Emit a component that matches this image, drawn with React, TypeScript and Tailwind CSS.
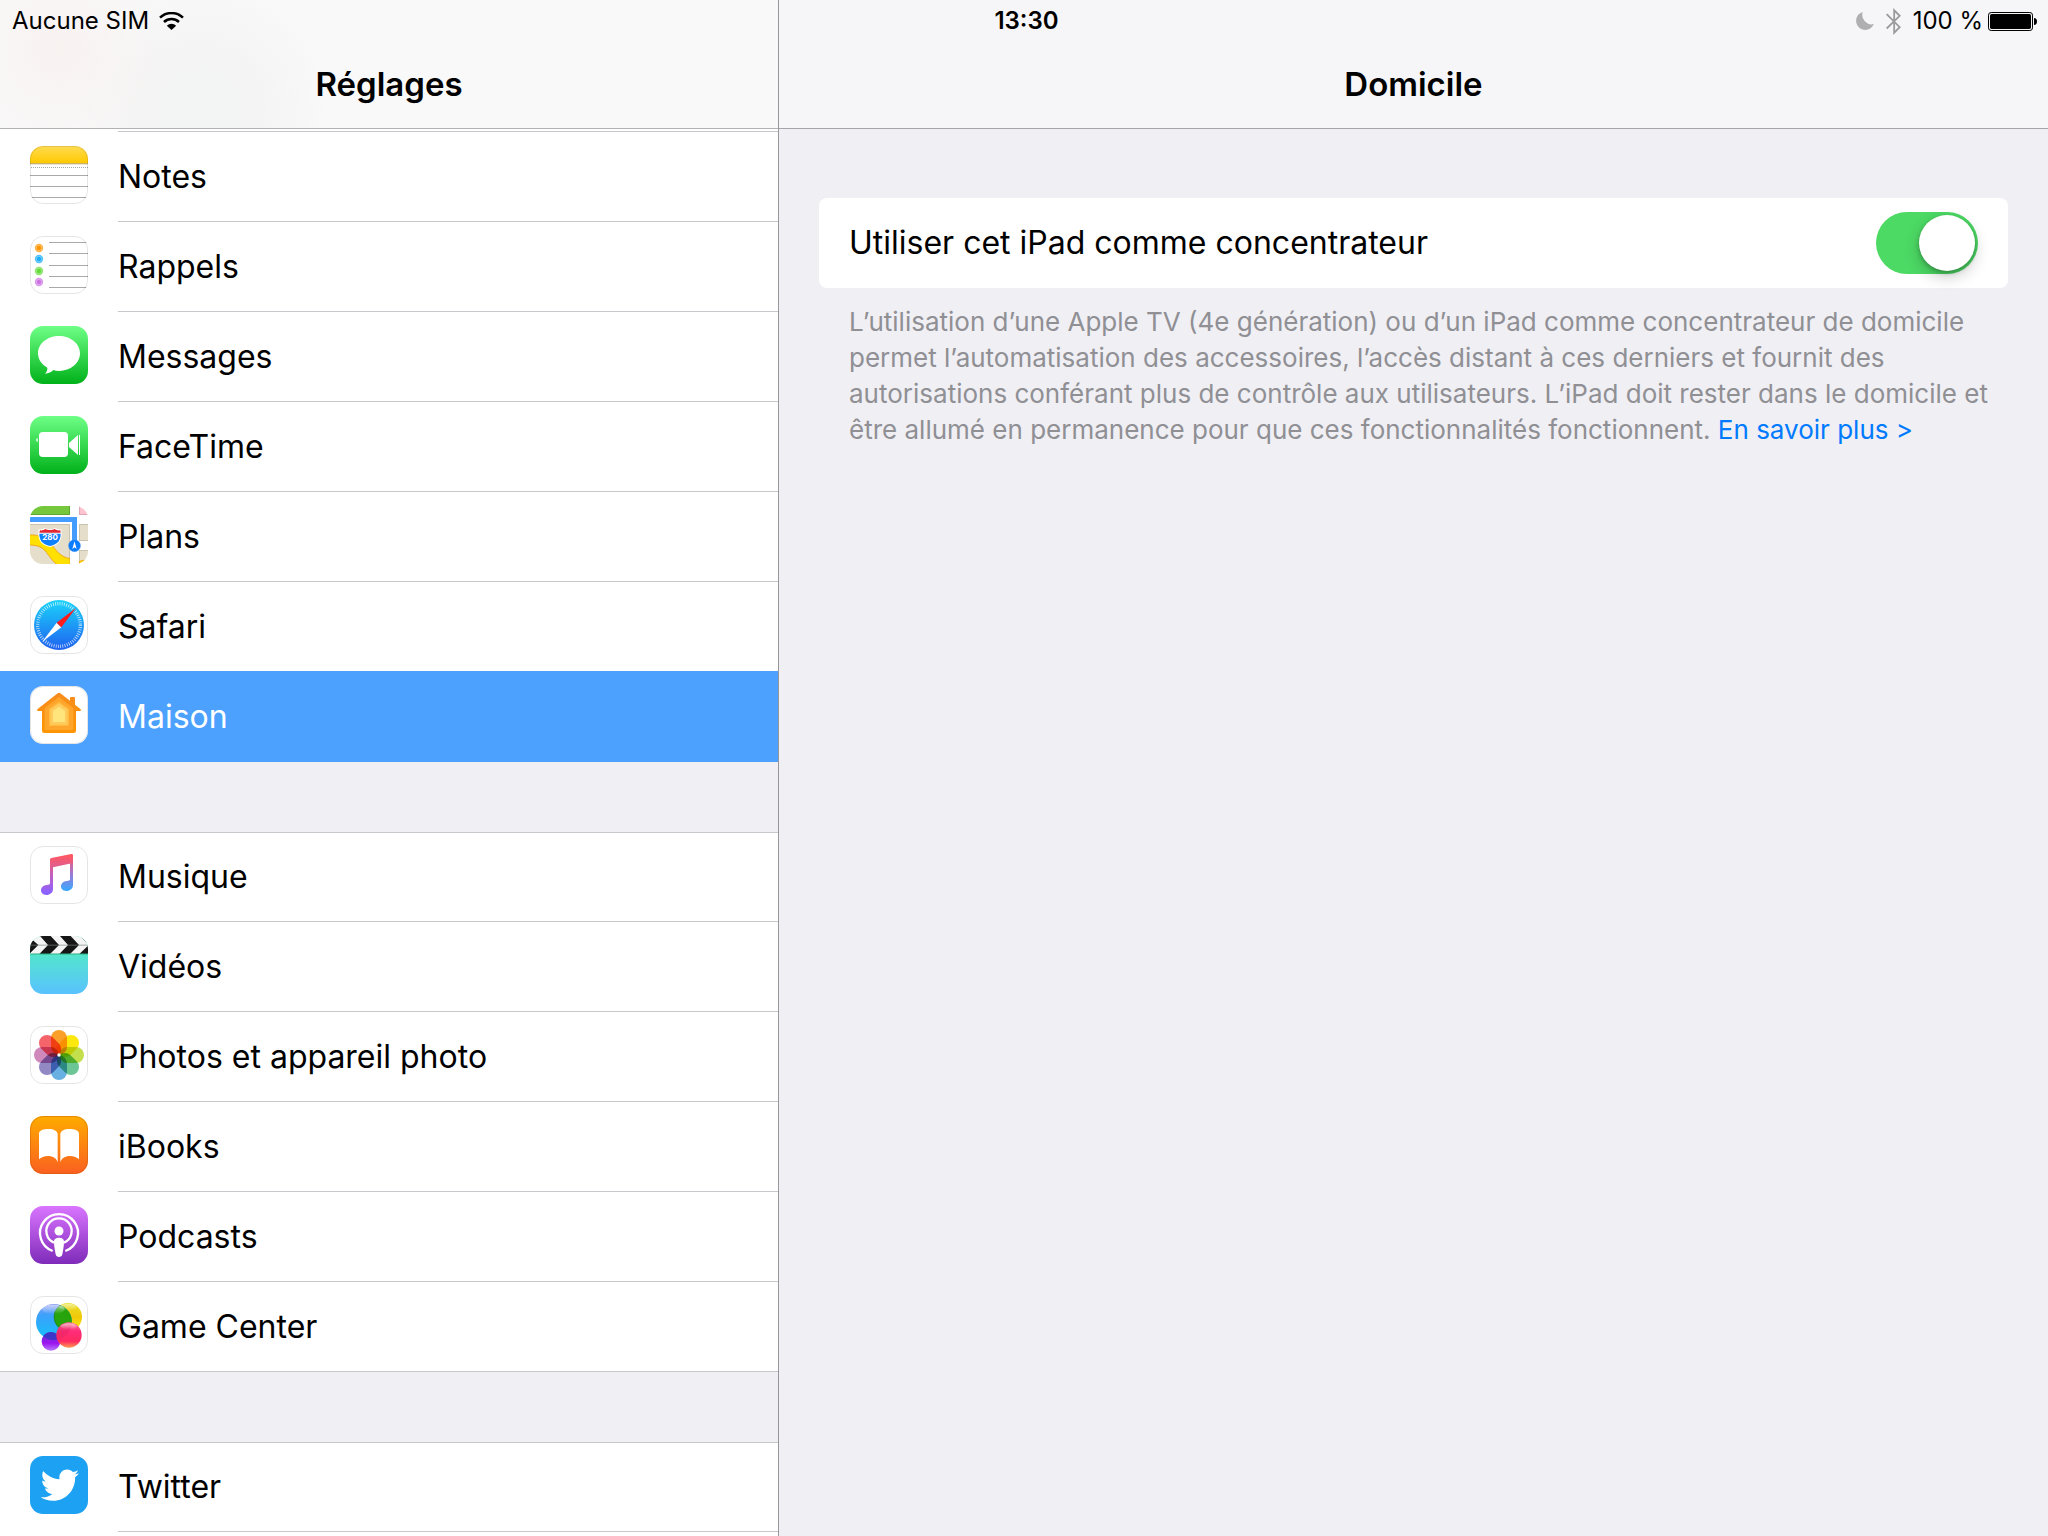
import { useState } from "react";
import type { ReactNode } from "react";
import { FaTwitter } from "react-icons/fa";
import clsx from "clsx";

// ---------- App icons ----------

type TileProps = { id: string; from?: string; to?: string; outlined?: boolean; children?: ReactNode };

// Rounded tile shared by every app icon, the art inside is drawn on a 174 grid
const Tile = ({ id, from = "#ffffff", to = "#ffffff", outlined, children }: TileProps) => (
  <svg viewBox="0 0 174 174" className="h-[58px] w-[58px] shrink-0" aria-hidden="true">
    <defs>
      <linearGradient id={`${id}-bg`} x1="0" y1="0" x2="0" y2="1">
        <stop offset="0" stopColor={from} />
        <stop offset="1" stopColor={to} />
      </linearGradient>
      <clipPath id={`${id}-clip`}>
        <rect width="174" height="174" rx="39" />
      </clipPath>
    </defs>
    <g clipPath={`url(#${id}-clip)`}>
      <rect width="174" height="174" fill={`url(#${id}-bg)`} />
      {children}
    </g>
    {outlined && (
      <rect x="1.5" y="1.5" width="171" height="171" rx="38" fill="none" stroke="#000" strokeOpacity="0.1" strokeWidth="3" />
    )}
  </svg>
);

const NotesIcon = () => (
  <Tile id="notes" outlined>
    <defs>
      <linearGradient id="notes-top" x1="0" y1="0" x2="0" y2="1">
        <stop offset="0" stopColor="#ffdb52" />
        <stop offset="1" stopColor="#ffc900" />
      </linearGradient>
    </defs>
    <rect width="174" height="52" fill="url(#notes-top)" />
    <rect y="51" width="174" height="4" fill="#c9b06a" />
    <path d="M3 64.5H174" stroke="#a9a9a9" strokeWidth="3" strokeDasharray="3 3" />
    <path d="M0 88.500H174M0 121.500H174M0 154.500H174" stroke="#a9a9ab" strokeWidth="3" />
  </Tile>
);

const reminders = [
  { y: 36, color: "#ff9500" },
  { y: 69, color: "#1badf8" },
  { y: 105, color: "#63da38" },
  { y: 138, color: "#cc73e1" },
];

const RemindersIcon = () => (
  <Tile id="reminders" outlined>
    {reminders.map((dot) => (
      <g key={dot.y} fill={dot.color}>
        <circle cx="27" cy={dot.y} r="12.5" fillOpacity="0.75" />
        <circle cx="27" cy={dot.y} r="8" stroke="#fff" strokeOpacity="0.45" strokeWidth="2" />
      </g>
    ))}
    <path d="M57 19.500H174M57 52.500H174M57 88.500H174M57 121.500H174M57 154.500H174" stroke="#a9a9ab" strokeWidth="3" />
  </Tile>
);

const MessagesIcon = () => (
  <Tile id="messages" from="#6eff86" to="#00b119">
    <path
      fill="#fff"
      d="M87 30C52 30 24 53 24 82C24 100 35 116 52 125C53 132 50 138 45 143C55 143 64 138 70 132C75 134 81 135 87 135C122 135 150 111 150 82C150 53 122 30 87 30Z"
    />
  </Tile>
);

const FaceTimeIcon = () => (
  <Tile id="facetime" from="#6eff86" to="#00b119">
    <g fill="#fff">
      <rect x="27" y="48" width="87" height="75" rx="11" />
      <path d="M117 81L144 57V117L117 93Z" />
      <rect x="147" y="57" width="3" height="60" />
      <path d="M23 66V78C17 76 17 68 23 66Z" />
    </g>
  </Tile>
);

const MapsIcon = () => (
  <Tile id="maps">
    <path fill="#76c73c" d="M0 0H120V27H0Z" />
    <path fill="none" stroke="#5fa830" strokeWidth="3" d="M118.500 0V25.500H0" />
    <path fill="#ffc3d0" d="M147 0H174V27H147Z" />
    <path fill="none" stroke="#dca9b5" strokeWidth="3" d="M148.500 0V25.500H174" />
    <path fill="#e4deca" d="M0 54H120V174H0ZM147 54H174V105H147ZM147 132H174V174H147Z" />
    <path fill="none" stroke="#c9c3b0" strokeWidth="3" d="M0 55.500H118.500V174M174 55.500H148.500V103.500H174M174 133.500H148.500V174" />
    <path
      fill="#ffe000"
      stroke="#f0a818"
      strokeWidth="3"
      d="M-4 87C30 84 52 100 68 120C84 142 98 154 120 158V180H88C66 168 58 148 44 133C30 119 14 117 -4 117Z"
    />
    <path fill="#ffe000" stroke="#f0a818" strokeWidth="3" d="M148 166C158 162 166 164 178 160V180H148Z" />
    <path fill="#fff" d="M120 28H147V180H120Z" />
    <path fill="#459cff" d="M0 33H141V120H126V48H0Z" />
    <path fill="#fff" d="M26 70C34 71 40 69 44 66C52 70 68 70 76 66C80 69 86 71 94 70C98 98 90 118 60 123C30 118 22 98 26 70Z" />
    <path fill="#e22733" d="M30 73C37 74 42 72 46 69C53 73 67 73 74 69C78 72 83 74 91 73L92 80H28Z" />
    <path fill="#0f80ff" d="M28 83H92C92 102 84 115 60 120C36 115 28 102 28 83Z" />
    <text x="60" y="103" fill="#fff" fontSize="24" fontWeight="700" textAnchor="middle" fontFamily="Inter, sans-serif">
      280
    </text>
    <circle cx="133.500" cy="119" r="18" fill="#0a7cff" stroke="#5a9ee8" strokeWidth="1.500" />
    <path fill="#fff" d="M133.500 106L140 129L133.500 124L127 129Z" />
  </Tile>
);

const SafariIcon = () => (
  <Tile id="safari" outlined>
    <defs>
      <linearGradient id="safari-dial" x1="0" y1="0" x2="0" y2="1">
        <stop offset="0" stopColor="#1bd3fb" />
        <stop offset="1" stopColor="#1f62f0" />
      </linearGradient>
    </defs>
    <circle cx="87" cy="87" r="75" fill="url(#safari-dial)" />
    <circle cx="87" cy="87" r="64" fill="none" stroke="#fff" strokeOpacity="0.75" strokeWidth="10" strokeDasharray="2.400 4.300" />
    <path fill="#fff" d="M36 138L80 80L94 94Z" />
    <path fill="#ff1b1b" d="M138 36L80 80L94 94Z" />
  </Tile>
);

const HomeIcon = () => (
  <Tile id="home" outlined>
    <defs>
      <linearGradient id="home-roof" x1="0" y1="0" x2="0" y2="1">
        <stop offset="0" stopColor="#f78c1e" />
        <stop offset="1" stopColor="#ff9500" />
      </linearGradient>
    </defs>
    <path
      fill="url(#home-roof)"
      d="M83 22Q87 19 91 22L120 44V36Q120 33 123 33H132Q135 33 135 36V56L152 70Q155 75 150 75H138V134Q138 141 131 141H43Q36 141 36 134V75H24Q19 75 22 70Z"
    />
    <path fill="#ffa52b" d="M87 33L130 66V128Q130 132 126 132H48Q44 132 44 128V66Z" />
    <path fill="#ffb93f" d="M87 47L117 68V120H57V68Z" />
    <path fill="#ffcb5c" d="M87 52L113 70V116H61V70Z" />
    <path fill="#ffe57c" d="M87 62L105 75V108H69V75Z" />
  </Tile>
);

const MusicIcon = () => (
  <Tile id="music" outlined>
    <defs>
      <linearGradient id="music-left" gradientUnits="userSpaceOnUse" x1="0" y1="34" x2="0" y2="140">
        <stop offset="0" stopColor="#ff5a63" />
        <stop offset="0.500" stopColor="#c25fc0" />
        <stop offset="1" stopColor="#8b62ff" />
      </linearGradient>
      <linearGradient id="music-right" gradientUnits="userSpaceOnUse" x1="0" y1="24" x2="0" y2="130">
        <stop offset="0" stopColor="#ff5761" />
        <stop offset="0.550" stopColor="#a077d0" />
        <stop offset="1" stopColor="#3fa6fc" />
      </linearGradient>
      <linearGradient id="music-beam" gradientUnits="userSpaceOnUse" x1="0" y1="28" x2="0" y2="64">
        <stop offset="0" stopColor="#ff5860" />
        <stop offset="1" stopColor="#dd5f93" />
      </linearGradient>
    </defs>
    <path
      fill="url(#music-left)"
      d="M60 40H69V129C69 140 60 147 49 147C39 147 33 141 33 133C33 124 40 118 50 117C57 116 60 116 60 110Z"
    />
    <path
      fill="url(#music-right)"
      d="M120 28H129V117C129 128 120 135 109 135C99 135 93 129 93 121C93 112 100 106 110 105C117 104 120 104 120 98Z"
    />
    <path fill="url(#music-beam)" d="M60 41Q60 37 64 36L124 24Q129 23 129 28V51L69 64L60 66Z" />
  </Tile>
);

const VideosIcon = () => (
  <Tile id="videos" from="#4ff5b4" to="#59c2ff">
    <rect width="174" height="54" fill="#f4f4f4" />
    <path
      fill="#161616"
      d="M0 10L8 12L25 27L0 52ZM30 0H62L87 27L60 54H28L54 27ZM90 0H122L147 27L120 54H88L114 27ZM174 29V54H148Z"
    />
    <path d="M152 2L174 24" stroke="#77807d" strokeWidth="2" />
    <path d="M0 27.500H174" stroke="#77807d" strokeWidth="2" />
    <path d="M0 54H174" stroke="#2fae80" strokeWidth="3" />
  </Tile>
);

const petals = ["#fa9f2a", "#fce80c", "#c3df4c", "#6bc594", "#68b0e2", "#9288c4", "#cf8abb", "#f5646a"];

const PhotosIcon = () => (
  <Tile id="photos" outlined>
    {petals.map((color, i) => (
      <rect
        key={color}
        x="63"
        y="12"
        width="48"
        height="74"
        rx="24"
        fill={color}
        transform={`rotate(${i * 45} 87 87)`}
        className="mix-blend-multiply"
      />
    ))}
    <circle cx="87" cy="87" r="5" fill="#fff" />
  </Tile>
);

const BooksIcon = () => (
  <Tile id="books" from="#ffab00" to="#fa6020">
    <path
      fill="#fff"
      d="M27 53C27 43 41 39 56 39C71 39 83 45 83 55V139C80 127 69 120 54 120C42 120 33 124 27 130ZM147 53C147 43 133 39 118 39C103 39 91 45 91 55V139C94 127 105 120 120 120C132 120 141 124 147 130Z"
    />
    <rect x="1.500" y="1.500" width="171" height="171" rx="38" fill="none" stroke="#b85400" strokeOpacity="0.350" strokeWidth="3" />
  </Tile>
);

const PodcastsIcon = () => (
  <Tile id="podcasts" from="#d975ff" to="#7f2bba">
    <g fill="none" stroke="#fff" strokeWidth="7">
      <path d="M68 135A57 57 0 1 1 106 135" />
      <path d="M72 110A38 38 0 1 1 102 110" />
    </g>
    <g fill="#fff">
      <circle cx="87" cy="75" r="13.500" />
      <path d="M72 107C72 98 79 95 87 95C95 95 102 98 102 107C102 120 99 134 97 145C96 151 92 153 87 153C82 153 78 151 77 145C75 134 72 120 72 107Z" />
    </g>
  </Tile>
);

const GameCenterIcon = () => (
  <Tile id="games" outlined>
    <defs>
      <linearGradient id="games-blue" x1="0" y1="0" x2="0" y2="1">
        <stop offset="0" stopColor="#8d9cf5" />
        <stop offset="0.300" stopColor="#3da0fa" />
        <stop offset="1" stopColor="#12c2fa" />
      </linearGradient>
      <linearGradient id="games-yellow" x1="0" y1="0" x2="0" y2="1">
        <stop offset="0" stopColor="#e8e02a" />
        <stop offset="0.500" stopColor="#f0c808" />
        <stop offset="1" stopColor="#f9ee10" />
      </linearGradient>
      <linearGradient id="games-pink" x1="0" y1="0" x2="0" y2="1">
        <stop offset="0" stopColor="#ff7fa0" />
        <stop offset="0.350" stopColor="#ff2c78" />
        <stop offset="0.750" stopColor="#ff2a60" />
        <stop offset="1" stopColor="#ff9a50" />
      </linearGradient>
      <linearGradient id="games-purple" x1="0" y1="0" x2="0" y2="1">
        <stop offset="0" stopColor="#5a3ad8" />
        <stop offset="0.600" stopColor="#9d14ee" />
        <stop offset="1" stopColor="#b57cff" />
      </linearGradient>
      <linearGradient id="games-shine" x1="0" y1="0" x2="0" y2="1">
        <stop offset="0" stopColor="#fff" stopOpacity="0.550" />
        <stop offset="1" stopColor="#fff" stopOpacity="0" />
      </linearGradient>
      <clipPath id="games-blue-clip">
        <circle cx="72" cy="78" r="54" />
      </clipPath>
    </defs>
    <circle cx="114" cy="63" r="42" fill="url(#games-yellow)" />
    <circle cx="72" cy="78" r="54" fill="url(#games-blue)" />
    <g clipPath="url(#games-blue-clip)">
      <circle cx="114" cy="63" r="42" fill="#27a30c" stroke="#1c7d20" strokeWidth="2" />
    </g>
    <circle cx="63" cy="136" r="28" fill="url(#games-purple)" />
    <g clipPath="url(#games-blue-clip)">
      <circle cx="63" cy="136" r="28" fill="#3c35c8" />
    </g>
    <circle cx="117" cy="117" r="38" fill="url(#games-pink)" />
    <g clipPath="url(#games-blue-clip)">
      <circle cx="117" cy="117" r="38" fill="#d8205a" fillOpacity="0.300" />
    </g>
    <ellipse cx="70" cy="40" rx="34" ry="14" fill="url(#games-shine)" />
    <ellipse cx="114" cy="33" rx="26" ry="10" fill="url(#games-shine)" />
    <ellipse cx="116" cy="91" rx="24" ry="9" fill="url(#games-shine)" />
  </Tile>
);

const TwitterIcon = () => (
  <Tile id="twitter" from="#1da1f2" to="#1da1f2">
    <FaTwitter x="32" y="30" size={115} fill="#fff" />
  </Tile>
);

// ---------- Status bar ----------

const StatusBar = () => (
  <div className="absolute inset-x-0 top-0 z-20 grid h-[42px] grid-cols-3 items-center pr-[11px] pl-3 text-[24px] leading-10">
    <div className="flex items-center gap-[10px]">
      <span>Aucune SIM</span>
      <svg viewBox="0 0 74 54" className="h-[18px] w-[25px]" aria-label="Wi-Fi">
        <g fill="none" stroke="#000" strokeWidth="7.500">
          <path d="M2.500 17A50 50 0 0 1 71.500 17" />
          <path d="M14.500 30A33 33 0 0 1 59.500 30" />
        </g>
        <path d="M37 54L23 41A20 20 0 0 1 51 41Z" />
      </svg>
    </div>
    <time className="pl-1 text-center font-semibold">13:30</time>
    <div className="flex items-center justify-end">
      <svg viewBox="0 0 54 55" className="mr-3 h-[18px] w-[18px]" aria-label="Ne pas déranger">
        <path fill="#afafb1" d="M20 0A28 28 0 1 0 54 37A29 29 0 0 1 20 0Z" />
      </svg>
      <svg viewBox="0 0 46 81" className="mr-3 h-[27px] w-[15px]" aria-label="Bluetooth">
        <path fill="none" stroke="#9b9b9d" strokeWidth="5.500" d="M2 18L42 58L25 75V6L42 23L2 62" />
      </svg>
      <span className="mr-[5px]">100 %</span>
      <svg viewBox="0 0 147 57" className="h-[19px] w-[49px]" aria-label="Batterie">
        <rect x="1.500" y="1.500" width="132" height="54" rx="8" fill="none" stroke="#000" strokeWidth="3" />
        <rect x="6" y="6" width="123" height="45" rx="5" />
        <path d="M138 18Q147 19 147 28.500Q147 38 138 39Z" />
      </svg>
    </div>
  </div>
);

// ---------- Sidebar ----------

type Item = { label: string; icon: ReactNode };

const groups: Item[][] = [
  [
    { label: "Notes", icon: <NotesIcon /> },
    { label: "Rappels", icon: <RemindersIcon /> },
    { label: "Messages", icon: <MessagesIcon /> },
    { label: "FaceTime", icon: <FaceTimeIcon /> },
    { label: "Plans", icon: <MapsIcon /> },
    { label: "Safari", icon: <SafariIcon /> },
    { label: "Maison", icon: <HomeIcon /> },
  ],
  [
    { label: "Musique", icon: <MusicIcon /> },
    { label: "Vidéos", icon: <VideosIcon /> },
    { label: "Photos et appareil photo", icon: <PhotosIcon /> },
    { label: "iBooks", icon: <BooksIcon /> },
    { label: "Podcasts", icon: <PodcastsIcon /> },
    { label: "Game Center", icon: <GameCenterIcon /> },
  ],
  [{ label: "Twitter", icon: <TwitterIcon /> }],
];

type RowProps = { item: Item; selected: boolean; last: boolean; onSelect: () => void };

const Row = ({ item, selected, last, onSelect }: RowProps) => (
  <li>
    <button
      onClick={onSelect}
      className={clsx(
        "flex w-full items-stretch gap-[30px] pl-[30px] text-left",
        selected ? "relative -mt-px h-[91px] bg-[#4ca1ff] pt-px text-white" : "h-[90px]",
        last && !selected && "border-b border-[#c8c7cc]"
      )}
    >
      <span className="pt-[14px]">{item.icon}</span>
      <span className={clsx("flex flex-1 items-center", !last && !selected && "border-b border-[#c8c7cc]")}>
        {item.label}
      </span>
    </button>
  </li>
);

const Sidebar = () => {
  const [selected, setSelected] = useState("Maison");

  return (
    <aside className="flex w-[779px] shrink-0 flex-col border-r border-[#96969b]">
      <header className="h-[129px] shrink-0 border-b border-[#b2b2b4] bg-[#f9f9f9] bg-[radial-gradient(circle_at_60px_50px,#f8f2f1_0,transparent_110px),radial-gradient(circle_at_200px_110px,#f3f4f4_0,#f4f4f4_60px,transparent_130px)] pt-10">
        <h1 className="text-center text-[33px] leading-[88px] font-semibold">Réglages</h1>
      </header>
      <nav className="flex min-h-0 flex-1 flex-col gap-[70px] overflow-hidden text-[32px]">
        {groups.map((group, g) => (
          <ul
            key={g}
            className={clsx("bg-white", g === 0 ? "pt-[3px]" : "shadow-[inset_0_1px_0_#c8c7cc]", g === groups.length - 1 && "flex-1")}
          >
            {/* Bottom edge of the row scrolled under the header */}
            {g === 0 && <li className="-mt-px ml-[118px] border-b border-[#c8c7cc]" />}
            {group.map((item, i) => (
              <Row
                key={item.label}
                item={item}
                selected={selected === item.label}
                last={i === group.length - 1 && g < groups.length - 1}
                onSelect={() => setSelected(item.label)}
              />
            ))}
          </ul>
        ))}
      </nav>
    </aside>
  );
};

// ---------- Detail pane ----------

const HomeSettings = () => {
  const [hub, setHub] = useState(true);

  return (
    <main className="min-w-0 flex-1">
      <header className="h-[129px] border-b border-[#a5a5aa] bg-[#f6f6f8] pt-10">
        <h2 className="text-center text-[33px] leading-[88px] font-semibold">Domicile</h2>
      </header>
      <section className="px-10 pt-[69px]">
        <div className="flex h-[90px] items-center justify-between rounded-lg bg-white px-[30px]">
          <label htmlFor="hub" className="text-[32px]">
            Utiliser cet iPad comme concentrateur
          </label>
          <input
            id="hub"
            type="checkbox"
            role="switch"
            checked={hub}
            onChange={(e) => setHub(e.target.checked)}
            className="h-[62px] w-[102px] appearance-none rounded-full bg-[#e5e5ea] p-[3px] before:block before:size-14 before:rounded-full before:bg-white before:shadow-[0_6px_16px_rgba(0,0,0,0.2),0_2px_4px_rgba(0,0,0,0.25)] before:transition-transform checked:bg-[#4cd964] checked:before:translate-x-10"
          />
        </div>
        <p className="pt-4 pr-3 pl-[30px] text-[26px] leading-9 text-[#8f8f94]">
          L’utilisation d’une Apple TV (4e génération) ou d’un iPad comme concentrateur de domicile permet
          l’automatisation des accessoires, l’accès distant à ces derniers et fournit des autorisations conférant plus
          de contrôle aux utilisateurs. L’iPad doit rester dans le domicile et être allumé en permanence pour que ces
          fonctionnalités fonctionnent.{" "}
          <a href="#en-savoir-plus" className="text-[#007aff]">
            En savoir plus &gt;
          </a>
        </p>
      </section>
    </main>
  );
};

const App = () => (
  <div className="relative flex h-screen overflow-hidden bg-[#efeff4] font-['Inter','Liberation_Sans',sans-serif] text-black">
    <StatusBar />
    <Sidebar />
    <HomeSettings />
  </div>
);

export default App;
